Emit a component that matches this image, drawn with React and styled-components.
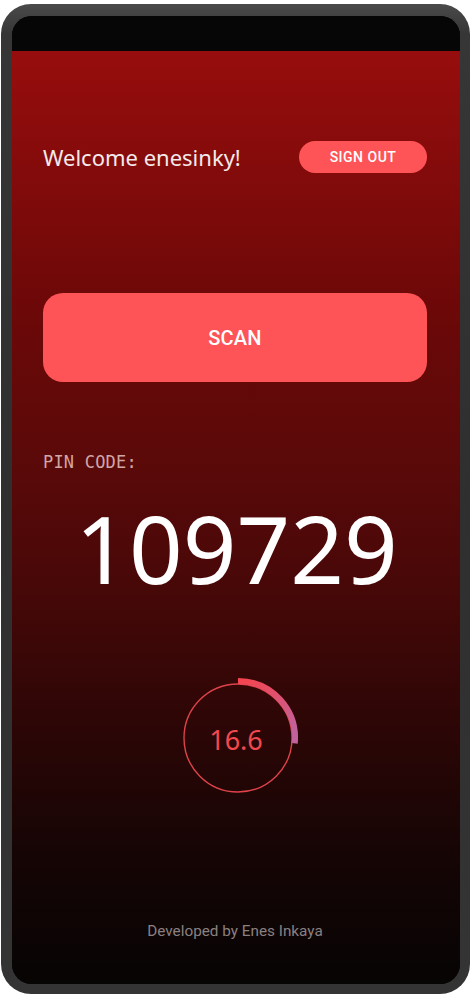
import React from "react";
import styled, { createGlobalStyle } from "styled-components";

const Global = createGlobalStyle`
  html, body { margin: 0; padding: 0; background: #ffffff; }
  body { font-family: "Noto Sans", Roboto, sans-serif; }
`;

const Frame = styled.div`
  box-sizing: border-box;
  margin: 4px 0 0 1px;
  width: 469px;
  height: 990px;
  border-radius: 30px;
  background: linear-gradient(180deg, #4a4a4a 0%, #363636 3%, #2f2f2f 50%, #343434 100%);
  padding: 12px 10px 10px 11px;
  display: flex;
`;

const Screen = styled.div`
  flex: 1;
  border-radius: 20px;
  overflow: hidden;
  display: flex;
  flex-direction: column;
  background: #060606;
  box-shadow: inset 0 0 0 1px #111;
`;

const StatusBar = styled.div`
  height: 35px;
  flex: none;
  background: #060606;
`;

const Content = styled.div`
  flex: 1;
  display: flex;
  flex-direction: column;
  padding: 0 33px 0 31px;
  background: linear-gradient(180deg, #970d0d 0%, #850b0b 12%, #6c0808 28%, #5b0909 44%, #4a0808 56%, #2d0606 72%, #160505 86%, #070404 100%);
`;

const HeaderRow = styled.div`
  margin-top: 90px;
  height: 32px;
  display: flex;
  align-items: center;
  justify-content: space-between;
`;

const Welcome = styled.div`
  font-family: "Noto Sans", sans-serif;
  font-size: 22px;
  color: #f3e9e9;
  margin-bottom: 1px;
`;

const Button = styled.button`
  border: none;
  background: #fe5457;
  color: #ffffff;
  font-family: Roboto, "Noto Sans", sans-serif;
  font-weight: 500;
  cursor: pointer;
  padding: 0;
  width: ${(p) => (p.$big ? "100%" : "128px")};
  height: ${(p) => (p.$big ? "89px" : "32px")};
  border-radius: ${(p) => (p.$big ? "20px" : "16px")};
  font-size: ${(p) => (p.$big ? "20px" : "14px")};
  letter-spacing: ${(p) => (p.$big ? "0.2px" : "0.5px")};
  margin-top: ${(p) => (p.$big ? "120px" : "0")};
`;

const PinLabel = styled.div`
  margin-top: 70px;
  font-family: "DejaVu Sans Mono", "Liberation Mono", monospace;
  font-size: 17px;
  line-height: 20px;
  color: #d1a6a6;
  letter-spacing: 0.2px;
`;

const Pin = styled.div`
  margin-top: 29px;
  font-family: "Noto Sans", sans-serif;
  font-size: 94px;
  line-height: 94px;
  color: #ffffff;
  text-align: center;
  padding-left: 3px;
`;

const TimerWrap = styled.div`
  margin-top: 81px;
  margin-left: 5px;
  align-self: center;
  position: relative;
  width: 124px;
  height: 124px;
`;

const TimerText = styled.div`
  position: absolute;
  inset: 0;
  display: flex;
  align-items: center;
  justify-content: center;
  font-family: "Noto Sans", sans-serif;
  font-size: 27px;
  color: #f2494e;
  padding-top: 2px;
  padding-right: 3px;
`;

const Footer = styled.div`
  margin-top: 121px;
  text-align: center;
  font-family: Roboto, sans-serif;
  font-size: 15.3px;
  line-height: 20px;
  color: #8b8080;
`;

function Timer({ value, fraction }) {
  const cx = 62, cy = 62, r = 57;
  const start = -Math.PI / 2;
  const end = start + fraction * 2 * Math.PI;
  const x1 = cx + r * Math.cos(start);
  const y1 = cy + r * Math.sin(start);
  const x2 = cx + r * Math.cos(end);
  const y2 = cy + r * Math.sin(end);
  const large = fraction > 0.5 ? 1 : 0;
  return (
    <TimerWrap>
      <svg width="124" height="124" viewBox="0 0 124 124">
        <defs>
          <linearGradient id="arcg" x1="0" y1="0" x2="0.4" y2="1">
            <stop offset="0%" stopColor="#f4454f" />
            <stop offset="100%" stopColor="#c2629c" />
          </linearGradient>
        </defs>
        <circle cx={cx} cy={cy} r="54" fill="none" stroke="#dd4349" strokeWidth="1.4" />
        <path
          d={`M ${x1} ${y1} A ${r} ${r} 0 ${large} 1 ${x2} ${y2}`}
          fill="none"
          stroke="url(#arcg)"
          strokeWidth="6"
        />
      </svg>
      <TimerText>{value}</TimerText>
    </TimerWrap>
  );
}

export default function App() {
  return (
    <>
      <Global />
      <Frame>
        <Screen>
          <StatusBar />
          <Content>
            <HeaderRow>
              <Welcome>Welcome enesinky!</Welcome>
              <Button>SIGN OUT</Button>
            </HeaderRow>
            <Button $big>SCAN</Button>
            <PinLabel>PIN CODE:</PinLabel>
            <Pin>109729</Pin>
            <Timer value="16.6" fraction={0.265} />
            <Footer>Developed by Enes Inkaya</Footer>
          </Content>
        </Screen>
      </Frame>
    </>
  );
}
